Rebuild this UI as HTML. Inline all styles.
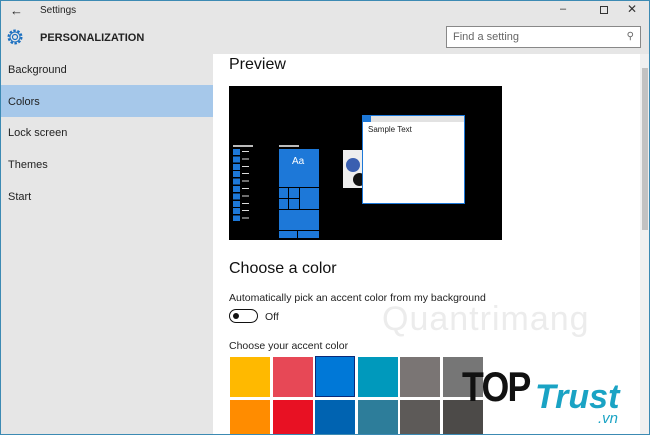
<!DOCTYPE html>
<html><head><style>
*{margin:0;padding:0;box-sizing:border-box}
body{width:650px;height:435px;overflow:hidden;font-family:"Liberation Sans",sans-serif;background:#fff;position:relative}
.a{position:absolute}
</style></head><body>
<div class="a" style="left:0;top:0;width:650px;height:54px;background:#e6e6e6"></div>
<div class="a" style="left:0;top:54px;width:213px;height:381px;background:#e6e6e6"></div>
<div class="a" style="left:0;top:85px;width:213px;height:32px;background:#a6c8ea"></div>
<div class="a" style="left:0;top:0;width:650px;height:435px;border:1px solid #3c8ab3;pointer-events:none;z-index:9"></div>
<div class="a" style="left:10px;top:3px;font-size:13px;color:#222">&#8592;</div>
<div class="a" style="left:40px;top:5px;font-size:10px;color:#222">Settings</div>
<div class="a" style="left:560px;top:3px;font-size:11px;color:#333">&#8211;</div>
<div class="a" style="left:600px;top:6px;width:8px;height:8px;border:1px solid #333"></div>
<div class="a" style="left:627px;top:2px;font-size:12px;color:#333">&#10005;</div>
<svg class="a" style="left:6px;top:28px" width="18" height="18" viewBox="0 0 18 18"><circle cx="9" cy="9" r="6.5" fill="none" stroke="#1a6fc0" stroke-width="2" stroke-dasharray="2.5 1.6"/><circle cx="9" cy="9" r="5" fill="none" stroke="#1a6fc0" stroke-width="1"/><circle cx="9" cy="9" r="2.5" fill="none" stroke="#1a6fc0" stroke-width="1.2"/></svg>
<div class="a" style="left:40px;top:32px;font-size:11px;font-weight:bold;color:#222">PERSONALIZATION</div>
<div class="a" style="left:446px;top:26px;width:195px;height:22px;border:1px solid #888;background:#fff;font-size:11px;color:#666;padding:4px 6px">Find a setting<span style="float:right;font-size:10px">&#9906;</span></div>
<div class="a" style="left:8px;top:64px;font-size:11px;color:#222">Background</div>
<div class="a" style="left:8px;top:96px;font-size:11px;color:#222">Colors</div>
<div class="a" style="left:8px;top:127px;font-size:11px;color:#222">Lock screen</div>
<div class="a" style="left:8px;top:159px;font-size:11px;color:#222">Themes</div>
<div class="a" style="left:8px;top:191px;font-size:11px;color:#222">Start</div>
<div class="a" style="left:640px;top:54px;width:10px;height:381px;background:#f0f0f0"></div>
<div class="a" style="left:642px;top:68px;width:6px;height:162px;background:#c2c2c2"></div>
<div class="a" style="left:229px;top:56px;font-size:16px;color:#111">Preview</div>
<div class="a" style="left:229px;top:86px;width:273px;height:154px;background:#000">
  <div class="a" style="left:4px;top:59px;width:20px;height:2px;background:#bbb"></div>
  <div class="a" style="left:4px;top:63px;width:7px;height:72px;background:repeating-linear-gradient(#1d78d8 0 6px,#000 6px 7.4px)"></div>
  <div class="a" style="left:13px;top:65px;width:7px;height:68px;background:repeating-linear-gradient(#ddd 0 1px,transparent 1px 7.4px)"></div>
  <div class="a" style="left:50px;top:59px;width:20px;height:2px;background:#bbb"></div>
  <div class="a" style="left:50px;top:63px;width:40px;height:89px;background:#1d78d8"></div>
  <div class="a" style="left:50px;top:101px;width:40px;height:1px;background:#000"></div>
  <div class="a" style="left:50px;top:123px;width:40px;height:1px;background:#000"></div>
  <div class="a" style="left:50px;top:144px;width:40px;height:1px;background:#000"></div>
  <div class="a" style="left:70px;top:101px;width:1px;height:22px;background:#000"></div>
  <div class="a" style="left:59px;top:101px;width:1px;height:22px;background:#000"></div>
  <div class="a" style="left:50px;top:112px;width:20px;height:1px;background:#000"></div>
  <div class="a" style="left:68px;top:144px;width:1px;height:8px;background:#000"></div>
  <div class="a" style="left:63px;top:70px;font-size:10px;color:#fff">Aa</div>
  <div class="a" style="left:114px;top:64px;width:30px;height:38px;background:#eee"><div class="a" style="left:3px;top:8px;width:14px;height:14px;border-radius:50%;background:#3a5fb0"></div><div class="a" style="left:10px;top:23px;width:13px;height:13px;border-radius:50%;background:#111"></div></div>
  <div class="a" style="left:133px;top:29px;width:103px;height:89px;background:#fff;border:1px solid #1d78d8"><div style="height:6px;background:#e2e2e2"><div style="width:8px;height:6px;background:#1d78d8"></div></div><div style="font-size:8px;color:#222;padding:3px 5px">Sample Text</div></div>
</div>
<div class="a" style="left:229px;top:260px;font-size:16px;color:#111">Choose a color</div>
<div class="a" style="left:229px;top:292px;font-size:10.5px;color:#222">Automatically pick an accent color from my background</div>
<div class="a" style="left:229px;top:309px;width:29px;height:14px;border:1.5px solid #111;border-radius:7px"><div class="a" style="left:3px;top:2.5px;width:6px;height:6px;border-radius:50%;background:#111"></div></div>
<div class="a" style="left:265px;top:311px;font-size:10.5px;color:#222">Off</div>
<div class="a" style="left:229px;top:340px;font-size:10.5px;color:#222">Choose your accent color</div>
<div class="a" style="left:230px;top:357px;width:40px;height:40px;background:#ffb900"></div>
<div class="a" style="left:273px;top:357px;width:40px;height:40px;background:#e74856"></div>
<div class="a" style="left:315px;top:356px;width:40px;height:41px;background:#0078d7;border:1.5px solid #0a2a7a"></div>
<div class="a" style="left:358px;top:357px;width:40px;height:40px;background:#0099bc"></div>
<div class="a" style="left:400px;top:357px;width:40px;height:40px;background:#7a7574"></div>
<div class="a" style="left:443px;top:357px;width:40px;height:40px;background:#767676"></div>
<div class="a" style="left:230px;top:400px;width:40px;height:35px;background:#ff8c00"></div>
<div class="a" style="left:273px;top:400px;width:40px;height:35px;background:#e81123"></div>
<div class="a" style="left:315px;top:400px;width:40px;height:35px;background:#0063b1"></div>
<div class="a" style="left:358px;top:400px;width:40px;height:35px;background:#2d7d9a"></div>
<div class="a" style="left:400px;top:400px;width:40px;height:35px;background:#5d5a58"></div>
<div class="a" style="left:443px;top:400px;width:40px;height:35px;background:#4c4a48"></div>
<div class="a" style="left:382px;top:300px;font-size:34px;color:#ececec;letter-spacing:1px">Quantrimang</div>
<div class="a" style="left:462px;top:363px;font-size:42px;font-weight:bold;color:#111;letter-spacing:-2px;transform:scaleX(.85);transform-origin:left">TOP</div>
<div class="a" style="left:535px;top:378px;font-size:34px;font-weight:bold;font-style:italic;color:#1aa3c4">Trust</div>
<div class="a" style="left:598px;top:410px;font-size:15px;font-style:italic;color:#1aa3c4">.vn</div>
</body></html>
